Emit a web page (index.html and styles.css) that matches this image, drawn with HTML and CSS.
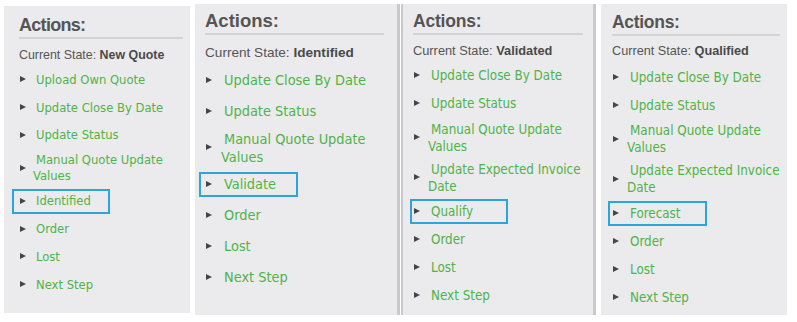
FILE: index.html
```html
<!DOCTYPE html>
<html lang="en">
<head>
<meta charset="utf-8">
<title>Actions</title>
<link rel="stylesheet" href="styles.css">
</head>
<body>
<div class="board">
  <section class="panel p1">
    <h2 class="title">Actions:</h2>
    <p class="state">Current State: <b>New Quote</b></p>
    <ul class="acts">
      <li><span class="tri"></span><a class="lnk">Upload Own Quote</a></li>
      <li><span class="tri"></span><a class="lnk">Update Close By Date</a></li>
      <li><span class="tri"></span><a class="lnk">Update Status</a></li>
      <li><span class="tri"></span><a class="lnk"><span class="nw">Manual Quote Update</span> Values</a></li>
      <li class="hl"><span class="tri"></span><a class="lnk">Identified</a></li>
      <li><span class="tri"></span><a class="lnk">Order</a></li>
      <li><span class="tri"></span><a class="lnk">Lost</a></li>
      <li><span class="tri"></span><a class="lnk">Next Step</a></li>
    </ul>
  </section>
  <section class="panel p2">
    <h2 class="title">Actions:</h2>
    <p class="state">Current State: <b>Identified</b></p>
    <ul class="acts">
      <li><span class="tri"></span><a class="lnk">Update Close By Date</a></li>
      <li><span class="tri"></span><a class="lnk">Update Status</a></li>
      <li><span class="tri"></span><a class="lnk"><span class="nw">Manual Quote Update</span> Values</a></li>
      <li class="hl"><span class="tri"></span><a class="lnk">Validate</a></li>
      <li><span class="tri"></span><a class="lnk">Order</a></li>
      <li><span class="tri"></span><a class="lnk">Lost</a></li>
      <li><span class="tri"></span><a class="lnk">Next Step</a></li>
    </ul>
  </section>
  <section class="panel p3">
    <h2 class="title">Actions:</h2>
    <p class="state">Current State: <b>Validated</b></p>
    <ul class="acts">
      <li><span class="tri"></span><a class="lnk">Update Close By Date</a></li>
      <li><span class="tri"></span><a class="lnk">Update Status</a></li>
      <li><span class="tri"></span><a class="lnk"><span class="nw">Manual Quote Update</span> Values</a></li>
      <li><span class="tri"></span><a class="lnk"><span class="nw">Update Expected Invoice</span> Date</a></li>
      <li class="hl"><span class="tri"></span><a class="lnk">Qualify</a></li>
      <li><span class="tri"></span><a class="lnk">Order</a></li>
      <li><span class="tri"></span><a class="lnk">Lost</a></li>
      <li><span class="tri"></span><a class="lnk">Next Step</a></li>
    </ul>
  </section>
  <section class="panel p4">
    <h2 class="title">Actions:</h2>
    <p class="state">Current State: <b>Qualified</b></p>
    <ul class="acts">
      <li><span class="tri"></span><a class="lnk">Update Close By Date</a></li>
      <li><span class="tri"></span><a class="lnk">Update Status</a></li>
      <li><span class="tri"></span><a class="lnk"><span class="nw">Manual Quote Update</span> Values</a></li>
      <li><span class="tri"></span><a class="lnk"><span class="nw">Update Expected Invoice</span> Date</a></li>
      <li class="hl"><span class="tri"></span><a class="lnk">Forecast</a></li>
      <li><span class="tri"></span><a class="lnk">Order</a></li>
      <li><span class="tri"></span><a class="lnk">Lost</a></li>
      <li><span class="tri"></span><a class="lnk">Next Step</a></li>
    </ul>
  </section>
</div>
</body>
</html>
```

FILE: styles.css
```css
html, body {
  margin: 0;
  padding: 0;
  background: #ffffff;
}

.board {
  display: flex;
  align-items: flex-start;
  padding: 4px 0 0 4px;
  width: 797px;
  height: 322px;
  box-sizing: border-box;
  overflow: hidden;
}

.panel {
  box-sizing: border-box;
  background: #ebebed;
  display: flex;
  flex-direction: column;
}

.title {
  margin: 0;
  font-family: "Liberation Sans", Arial, sans-serif;
  font-weight: bold;
  line-height: 20px;
  color: #555555;
  border-bottom: 2px solid #d3d3d5;
}

.state {
  margin: 0;
  font-family: "Liberation Sans", Arial, sans-serif;
  line-height: 15px;
  color: #555555;
  white-space: nowrap;
}

.state b {
  color: #4a4a4a;
}

.acts {
  list-style: none;
  margin: 0;
  padding: 0;
  font-family: "DejaVu Sans Condensed", "DejaVu Sans", Verdana, sans-serif;
  font-stretch: condensed;
}

.acts li {
  display: flex;
  align-items: center;
  padding: 3px 0;
}

.tri {
  flex: none;
  width: 15px;
  height: 7px;
  position: relative;
}

.tri::before {
  content: "";
  position: absolute;
  left: 1px;
  top: 0;
  border-style: solid;
  border-width: 3.5px 0 3.5px 6px;
  border-color: transparent transparent transparent #454545;
}

.lnk {
  color: #4fb348;
  text-indent: 3px;
  text-decoration: none;
  display: block;
}

.nw {
  white-space: nowrap;
}

.hl {
  position: relative;
}

.hl::after {
  content: "";
  position: absolute;
  top: 50%;
  height: 25px;
  margin-top: -12.5px;
  border: 2px solid #2aa6dc;
  box-sizing: border-box;
}

/* panel 1 */
.p1 {
  width: 186px;
  height: 307px;
  margin-top: 2px;
  padding: 9px 7px 0 15px;
}
.p1 .title { font-size: 18px; letter-spacing: -0.7px; padding-bottom: 2px; }
.p1 .state { font-size: 12.4px; margin-top: 8.5px; }
.p1 .acts { font-size: 12.9px; line-height: 16px; margin-top: 3.5px; }
.p1 .acts li { min-height: 21.8px; }
.p1 .tri { width: 14px; }
.p1 .hl::after { left: -7px; width: 98px; }

/* panel 2 */
.p2 {
  width: 205px;
  height: 311px;
  margin-left: 5px;
  padding: 6.5px 13px 0 10px;
  border-right: 3px solid #c9c9cb;
}
.p2 .title { font-size: 18.5px; padding-bottom: 2.5px; }
.p2 .state { font-size: 13.6px; margin-top: 10px; }
.p2 .acts { font-size: 14.4px; line-height: 18px; margin-top: 4.5px; }
.p2 .acts li { min-height: 25px; }
.p2 .tri { width: 16px; }
.p2 .hl::after { left: -6px; width: 99px; }

/* panel 3 */
.p3 {
  width: 195px;
  height: 311px;
  margin-left: 1px;
  padding: 6.5px 10px 0 10px;
  border-left: 2px solid #c9c9cb;
  border-right: 3px solid #c9c9cb;
}
.p3 .title { font-size: 17.5px; letter-spacing: -0.2px; padding-bottom: 2px; }
.p3 .state { font-size: 12.8px; margin-top: 8px; }
.p3 .acts { font-size: 13.3px; line-height: 17px; margin-top: 4px; }
.p3 .acts li { min-height: 22px; }
.p3 .hl::after { left: -3px; width: 98px; }

/* panel 4 */
.p4 {
  width: 186px;
  height: 311px;
  margin-left: 5px;
  padding: 7.5px 7px 0 11px;
}
.p4 .title { font-size: 17.5px; letter-spacing: -0.3px; padding-bottom: 2px; }
.p4 .state { font-size: 12.7px; margin-top: 8px; }
.p4 .acts { font-size: 13.3px; line-height: 17px; margin-top: 4.5px; }
.p4 .acts li { min-height: 22px; }
.p4 .hl::after { left: -4px; width: 99px; }
```
